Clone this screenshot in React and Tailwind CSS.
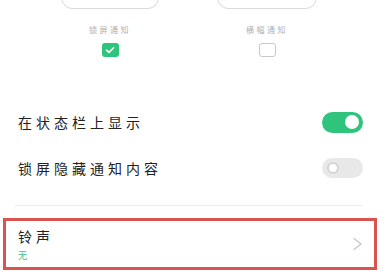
import React from "react";

const font = { fontFamily: '"Noto Sans CJK SC", "Noto Sans", sans-serif' };

const Check = ({ checked }) =>
  checked ? (
    <div className="w-[17px] h-[14px] rounded-[3px] bg-[#2fc47c] flex items-center justify-center">
      <svg width="10" height="8" viewBox="0 0 10 8" fill="none">
        <path d="M1.5 4.2 L4 6.4 L8.6 1.8" stroke="white" strokeWidth="1.6" strokeLinecap="round" strokeLinejoin="round" />
      </svg>
    </div>
  ) : (
    <div className="w-[17px] h-[14px] rounded-[3px] border-[1.5px] border-[#c8c8c8] bg-white" />
  );

const Toggle = ({ on }) =>
  on ? (
    <div className="w-[41px] h-[21px] rounded-full bg-[#2fc47c] flex items-center justify-end pr-[4px]">
      <div className="w-[14px] h-[14px] rounded-full bg-white" />
    </div>
  ) : (
    <div className="w-[41px] h-[20px] rounded-full bg-[#e8e8e8] flex items-center pl-[5px]">
      <div className="w-[12px] h-[12px] rounded-full bg-white border-[2.5px] border-[#d4d4d4]" />
    </div>
  );

const Option = ({ label, checked, width }) => (
  <div className="flex flex-col items-center" style={{ width }}>
    <div className="w-full h-[30px] -mt-[21px] border-[1.5px] border-t-0 border-[#dcdcdc] rounded-b-[12px]" />
    <div className="mt-[16px] text-[8px] leading-[10px] tracking-[2.5px] text-[#b0b0b0]">{label}</div>
    <div className="mt-[8px]">
      <Check checked={checked} />
    </div>
  </div>
);

const Row = ({ label, on }) => (
  <div className="h-[46px] flex items-center justify-between pl-[18px] pr-[25px]">
    <span className="text-[14px] tracking-[4px] text-[#222]">{label}</span>
    <Toggle on={on} />
  </div>
);

export default function App() {
  return (
    <div className="w-[388px] h-[278px] bg-white overflow-hidden" style={font}>
      <div className="flex pl-[61px] gap-[58px]">
        <Option label="锁屏通知" checked width="98px" />
        <Option label="横幅通知" checked={false} width="100px" />
      </div>
      <div className="mt-[42px]">
        <Row label="在状态栏上显示" on />
        <Row label="锁屏隐藏通知内容" on={false} />
      </div>
      <div className="mt-[14px] ml-[15px] mr-[26px] h-px bg-[#ececec]" />
      <div className="mt-[12px] ml-[3px] w-[374px] h-[52px] border-[3px] border-[#d9534f] flex items-center justify-between pl-[12px] pr-[11px]">
        <div className="flex flex-col">
          <span className="text-[14px] leading-[18px] tracking-[4px] text-[#222]">铃声</span>
          <span className="text-[9px] leading-[12px] mt-[5px] text-[#3cc48b]">无</span>
        </div>
        <svg width="11" height="14" viewBox="0 0 11 14" fill="none">
          <path d="M2 1.5 L9 7 L2 12.5" stroke="#c4c4c4" strokeWidth="1.2" strokeLinecap="round" strokeLinejoin="round" />
        </svg>
      </div>
    </div>
  );
}
